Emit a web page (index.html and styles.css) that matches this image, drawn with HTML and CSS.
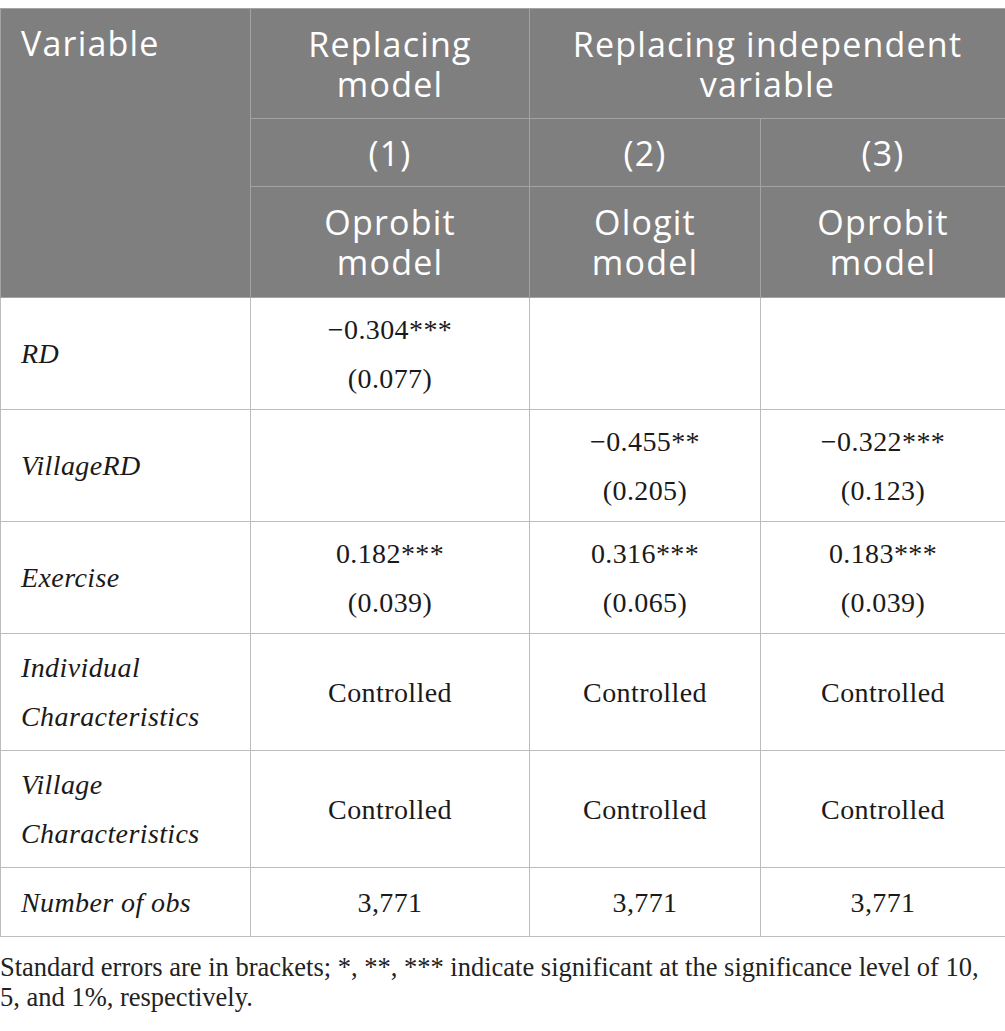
FILE: index.html
```html
<!DOCTYPE html>
<html lang="en">
<head>
  <meta charset="UTF-8" />
  <title>Robustness test</title>
  <link rel="stylesheet" href="styles.css">
</head>
<body>
  <table class="results">
    <colgroup>
      <col class="c-var">
      <col class="c-one">
      <col class="c-two">
      <col class="c-three">
    </colgroup>
    <thead>
      <tr class="h-top">
        <th rowspan="3" class="var-head">Variable</th>
        <th>Replacing model</th>
        <th colspan="2">Replacing independent variable</th>
      </tr>
      <tr class="h-num">
        <th>(1)</th>
        <th>(2)</th>
        <th>(3)</th>
      </tr>
      <tr class="h-model">
        <th>Oprobit model</th>
        <th>Ologit model</th>
        <th>Oprobit model</th>
      </tr>
    </thead>
    <tbody>
      <tr class="r-coef">
        <td class="label">RD</td>
        <td>−0.304***<br>(0.077)</td>
        <td></td>
        <td></td>
      </tr>
      <tr class="r-coef">
        <td class="label">VillageRD</td>
        <td></td>
        <td>−0.455**<br>(0.205)</td>
        <td>−0.322***<br>(0.123)</td>
      </tr>
      <tr class="r-coef">
        <td class="label">Exercise</td>
        <td>0.182***<br>(0.039)</td>
        <td>0.316***<br>(0.065)</td>
        <td>0.183***<br>(0.039)</td>
      </tr>
      <tr class="r-ctrl">
        <td class="label">Individual Characteristics</td>
        <td>Controlled</td>
        <td>Controlled</td>
        <td>Controlled</td>
      </tr>
      <tr class="r-ctrl">
        <td class="label">Village Characteristics</td>
        <td>Controlled</td>
        <td>Controlled</td>
        <td>Controlled</td>
      </tr>
      <tr class="r-obs">
        <td class="label">Number of obs</td>
        <td>3,771</td>
        <td>3,771</td>
        <td>3,771</td>
      </tr>
    </tbody>
  </table>
  <p class="note">Standard errors are in brackets; *, **, *** indicate significant at the significance level of 10, 5, and 1%, respectively.</p>
</body>
</html>
```

FILE: styles.css
```css
body {
  margin: 8px 0 0;
  background: #fff;
  color: #1a1a1a;
  font-family: "Liberation Serif", "Times New Roman", serif;
}

.results {
  width: 1005px;
  border-collapse: collapse;
  table-layout: fixed;
}

.c-var { width: 250px; }
.c-one { width: 279px; }
.c-two { width: 231px; }
.c-three { width: 245px; }

.results th {
  background: #7f7f7f;
  color: #fff;
  font-family: "Open Sans", sans-serif;
  font-weight: normal;
  font-size: 34px;
  letter-spacing: 1.2px;
  line-height: 40px;
  border: 1px solid #a3a3a3;
  text-align: center;
  padding: 0 20px;
}

.results th.var-head {
  text-align: left;
  vertical-align: top;
  padding-top: 14px;
}

.h-top th { height: 109px; }
.h-num th { height: 67px; }
.h-model th { height: 110px; }

.results td {
  border: 1px solid #bdbdbd;
  font-size: 28px;
  letter-spacing: 0.4px;
  line-height: 49px;
  text-align: center;
  padding: 0 20px;
}

.results td.label {
  text-align: left;
  font-style: italic;
}

.r-coef td { height: 111px; }
.r-ctrl td { height: 116px; }
.r-obs td { height: 68px; }

.note {
  margin: 15px 0 0;
  font-size: 26.5px;
  line-height: 30px;
  color: #222;
}
```
